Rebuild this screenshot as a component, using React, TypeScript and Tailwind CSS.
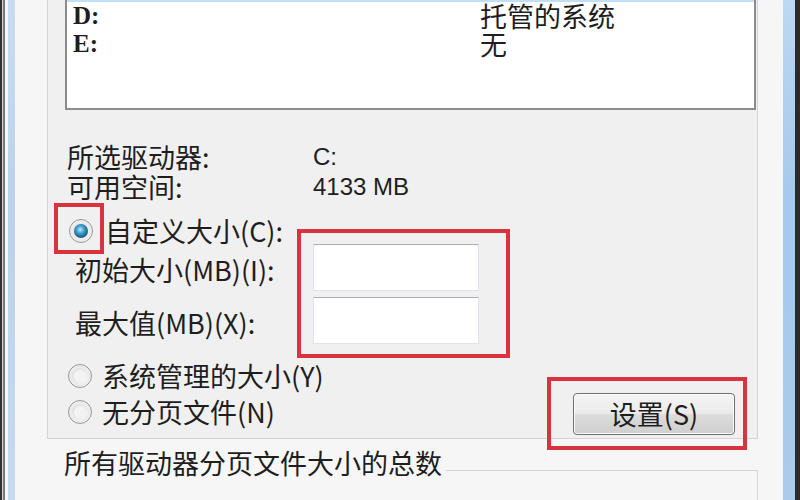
import React from 'react'

const cjk = "font-['Noto_Sans_CJK_SC','Noto_Sans',sans-serif]"

function Radio({ checked }: { checked?: boolean }) {
  return (
    <span className="flex h-[24px] w-[24px] shrink-0 items-center justify-center rounded-full border border-[#9a9a9a] bg-[linear-gradient(135deg,#d9d9d9,#fafafa)] shadow-[inset_0_0_0_3px_#ececec]">
      {checked ? (
        <span className="h-[14px] w-[14px] rounded-full bg-[radial-gradient(circle_at_45%_40%,#b8ecfb_0%,#3d9ccb_35%,#14517c_75%,#0b2f4d_100%)]" />
      ) : (
        <span className="h-[12px] w-[12px] rounded-full bg-[#f3f3f3]" />
      )}
    </span>
  )
}

function TextBox() {
  return <div className="h-[47px] w-[166px] border border-[#e2e3ea] border-t-[#abadb3] bg-white" />
}

export default function App() {
  const drives = [
    { d: 'D:', v: '托管的系统' },
    { d: 'E:', v: '无' },
  ]

  return (
    <div className={`flex h-[500px] w-[800px] overflow-hidden text-[#1e1e1e] ${cjk}`}>
      {/* window frame, left */}
      <div className="flex h-full w-[15px] shrink-0">
        <div className="w-[2px] bg-[#2f2f2f]" />
        <div className="w-[1px] bg-[#d8d8d8]" />
        <div className="w-[2px] bg-[#7a7a7a]" />
        <div className="w-[3px] bg-[#f4f7fb]" />
        <div className="w-[7px] bg-[linear-gradient(#c9dcf0,#bcd2ea_40%,#c6d9ee)]" />
      </div>

      {/* dialog body */}
      <div className="relative flex flex-1 flex-col bg-[#f6f6f6] pl-[32px]">
        {/* page file group */}
        <div className="flex h-[446px] w-[711px] flex-col border-x border-b border-[#d4d4d4] bg-[#f0f0f0]">
          {/* drive list */}
          <div className="ml-[17px] h-[110px] w-[691px] border-x-2 border-b-2 border-[#8c8c8c] bg-white">
            <div className="h-[2px] bg-[#bfe0f7]" />
            {drives.map((r) => (
              <div key={r.d} className="grid h-[28px] grid-cols-[407px_1fr] items-center pl-[6px] leading-[28px]">
                <span className="font-['Liberation_Serif',serif] text-[25px] font-bold">{r.d}</span>
                <span className="text-[27px]">{r.v}</span>
              </div>
            ))}
          </div>

          {/* selected drive info */}
          <div className="mt-[32px] grid grid-cols-[246px_1fr] pl-[19px] text-[27px] leading-[30px]">
            <span>所选驱动器:</span>
            <span className="font-['Liberation_Sans',sans-serif] text-[24px]">C:</span>
            <span>可用空间:</span>
            <span className="font-['Liberation_Sans',sans-serif] text-[24px]">4133 MB</span>
          </div>

          {/* custom size */}
          <div className="mt-[16px] flex h-[26px] items-center gap-[12px] pl-[21px] text-[27px] leading-[26px]">
            <Radio checked />
            <span>自定义大小(C):</span>
          </div>
          <div className="grid grid-cols-[265px_auto] gap-y-[6px] text-[27px]">
            <div className="flex items-center pl-[27px] pt-[4px] leading-[30px]">初始大小(MB)(I):</div>
            <TextBox />
            <div className="flex items-center pl-[27px] pt-[4px] leading-[30px]">最大值(MB)(X):</div>
            <TextBox />
          </div>

          {/* other options + set button */}
          <div className="mt-[17px] flex items-start justify-between pr-[22px] text-[27px]">
            <div className="flex flex-col gap-[6px] pl-[20px]">
              <div className="flex h-[30px] items-center gap-[10px] leading-[30px]">
                <Radio />
                <span>系统管理的大小(Y)</span>
              </div>
              <div className="flex h-[30px] items-center gap-[10px] leading-[30px]">
                <Radio />
                <span>无分页文件(N)</span>
              </div>
            </div>
            <button className="mt-[32px] flex h-[42px] w-[162px] items-center justify-center rounded-[4px] border border-[#707070] bg-[linear-gradient(#f4f4f4_0%,#ebebeb_48%,#dcdcdc_52%,#cfcfcf_100%)] text-[27px] leading-[30px] shadow-[inset_0_0_0_1px_#fbfbfb]">
              设置(S)
            </button>
          </div>
        </div>

        {/* total group */}
        <div className="mt-[9px] flex w-[711px] items-start pl-[17px] text-[27px]">
          <span className="h-[30px] leading-[30px]">所有驱动器分页文件大小的总数</span>
          <div className="ml-[4px] mt-[22px] h-[30px] flex-1 border-r border-t border-[#d4d4d4]" />
        </div>

        {/* annotation boxes */}
        <div className="absolute left-[39px] top-[203px] h-[51px] w-[50px] border-4 border-[#d8343f]" />
        <div className="absolute left-[282px] top-[229px] h-[129px] w-[213px] border-4 border-[#d8343f]" />
        <div className="absolute left-[532px] top-[377px] h-[73px] w-[200px] border-4 border-[#d8343f]" />
      </div>

      {/* window frame, right */}
      <div className="flex h-full w-[17px] shrink-0">
        <div className="w-[12px] bg-[linear-gradient(#bcd8f2,#a6c9ec_40%,#aacbeb)]" />
        <div className="w-[5px] bg-[#2b2b2b]" />
      </div>
    </div>
  )
}
